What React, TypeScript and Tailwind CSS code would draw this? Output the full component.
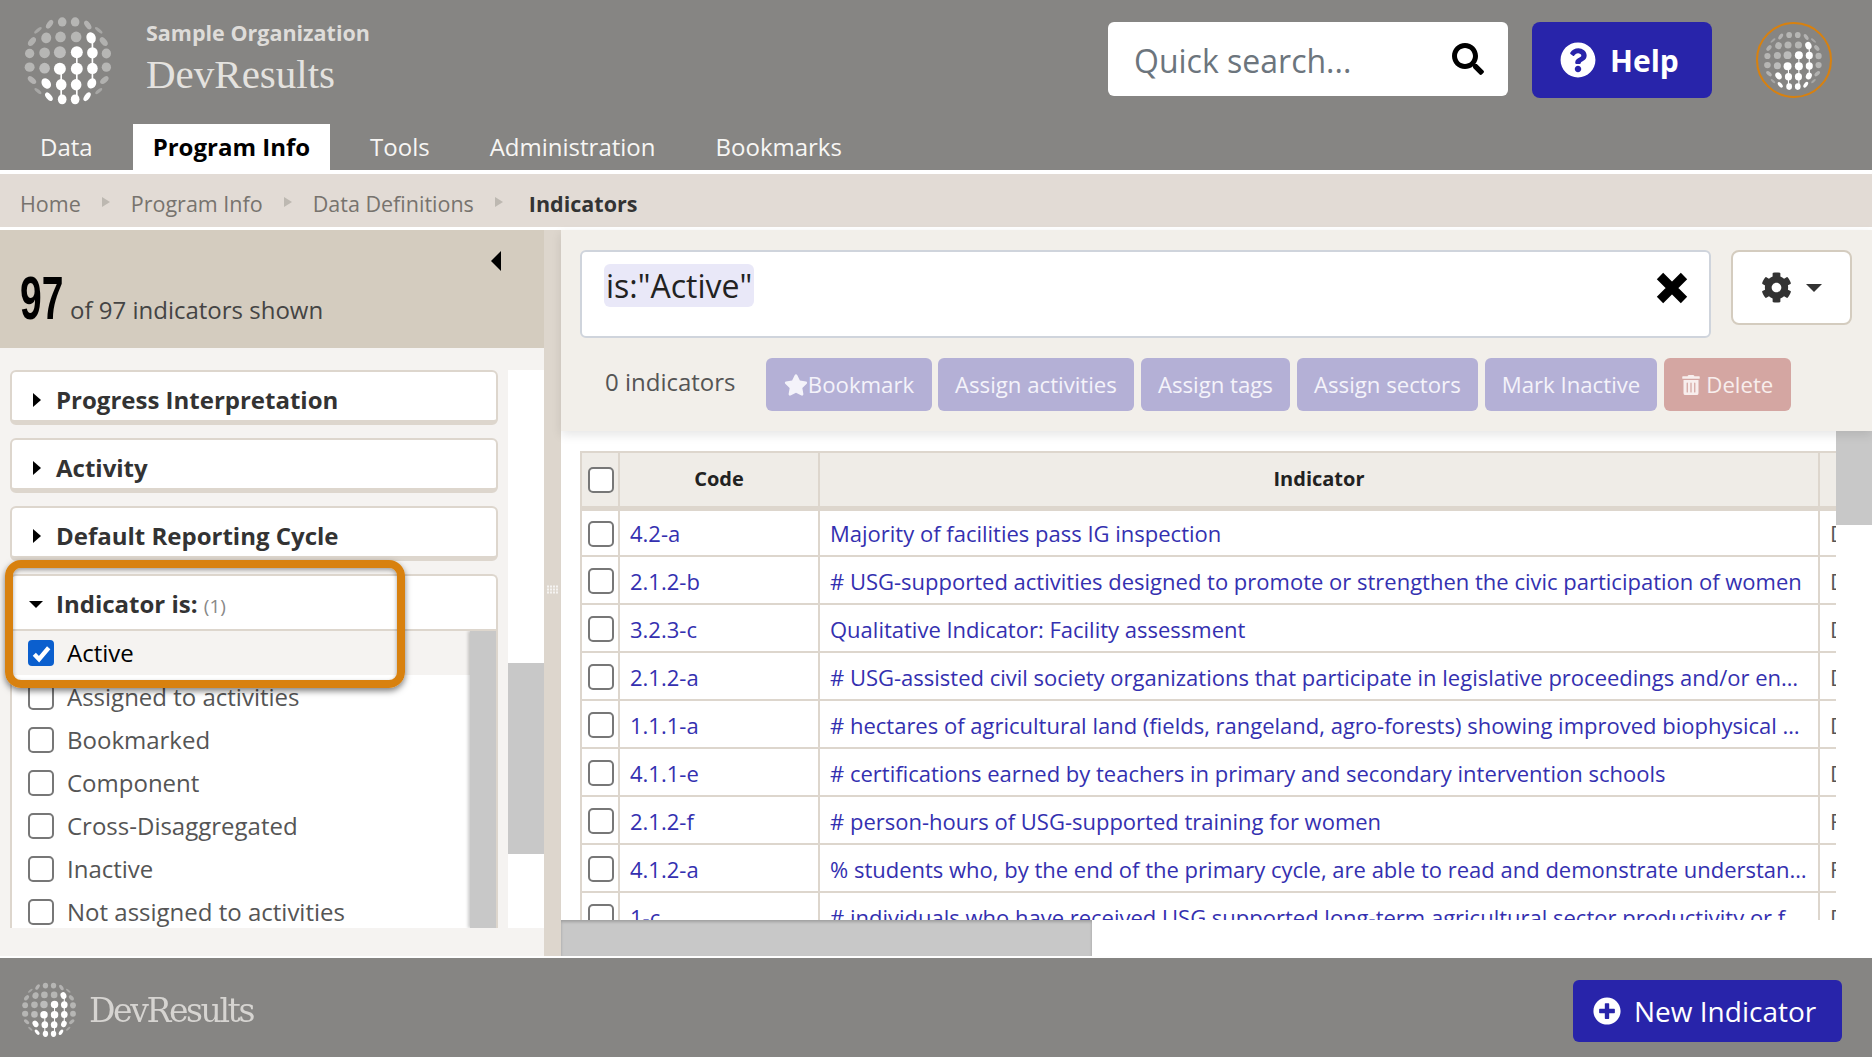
import { FaCog, FaPlusCircle, FaQuestionCircle, FaSearch, FaStar, FaTrashAlt } from 'react-icons/fa';

// x, y, rx, ry, rotation, opacity (traced from the logo)
const globeDots: number[][] = [
  [70, 62, 5, 14, 50, 0.28], [105, 44, 8, 15, 35, 0.38], [143, 37, 13, 14, 0, 0.4], [182, 37, 13, 14, 0, 0.4], [220, 46, 8, 15, -35, 0.38], [253, 62, 5, 14, -50, 0.28],
  [52, 96, 9, 15, 40, 0.36], [95, 85, 15, 16, 15, 0.4], [138, 82, 16, 16, 0, 0.4], [185, 82, 16, 16, 0, 0.4], [230, 85, 14, 17, -20, 1], [268, 96, 9, 15, -40, 0.36],
  [45, 132, 14, 14, 0, 0.4], [90, 130, 16, 16, 0, 0.4], [136, 128, 18, 18, 0, 0.45], [187, 128, 18, 18, 0, 1], [234, 130, 16, 17, 0, 1], [276, 132, 14, 15, 0, 0.4],
  [45, 173, 15, 14, 0, 0.4], [90, 176, 16, 16, 0, 0.45], [136, 178, 18, 18, 0, 1], [187, 178, 18, 18, 0, 1], [234, 177, 16, 17, 0, 1], [276, 173, 14, 14, 0, 0.4],
  [52, 212, 8, 15, -50, 0.38], [95, 222, 13, 17, -35, 1], [140, 226, 16, 17, 0, 1], [185, 226, 16, 17, 0, 1], [232, 222, 13, 16, 25, 1], [270, 212, 8, 15, 50, 0.36],
  [70, 245, 5, 13, -50, 0.28], [103, 262, 8, 15, -40, 1], [143, 270, 13, 15, 0, 1], [182, 270, 13, 15, 0, 1], [218, 262, 8, 15, 35, 1], [253, 245, 5, 13, 50, 0.28],
];

function Globe({ className }: { className: string }) {
  return (
    <svg viewBox="25 10 280 280" className={className}>
      <path d="M187 130V270M234 85V220M140 178V270" stroke="#fff" strokeWidth="5" fill="none" />
      {globeDots.map(([x, y, rx, ry, rot, o], i) => (
        <ellipse key={i} cx={x} cy={y} rx={rx} ry={ry} transform={`rotate(${rot} ${x} ${y})`} fill="#fff" opacity={o} />
      ))}
    </svg>
  );
}

function Checkbox({ checked }: { checked?: boolean }) {
  if (checked) {
    return (
      <span className="flex h-[26px] w-[26px] shrink-0 items-center justify-center rounded-[4px] bg-[#0b5fce]">
        <svg viewBox="0 0 16 16" className="h-[23px] w-[23px]">
          <path d="M3 8.5l3.3 3.5L13 4" fill="none" stroke="#fff" strokeWidth="3" />
        </svg>
      </span>
    );
  }
  return <span className="block h-[26px] w-[26px] shrink-0 rounded-[5px] border-2 border-[#777] bg-white" />;
}

function Caret({ open }: { open?: boolean }) {
  if (open) return <span className="h-0 w-0 border-x-[7px] border-t-[7px] border-x-transparent border-t-black" />;
  return <span className="ml-[3px] h-0 w-0 border-y-[7px] border-l-[8px] border-y-transparent border-l-black" />;
}

function FilterCard({ title }: { title: string }) {
  return (
    <div className="flex h-[55px] items-center gap-[15px] rounded-[6px] border-2 border-b-[5px] border-[#ddd6cd] bg-white pl-[18px] pt-[7px] text-[24px] font-bold text-[#333]">
      <Caret />
      <span>{title}</span>
    </div>
  );
}

const tabs = ['Data', 'Program Info', 'Tools', 'Administration', 'Bookmarks'];
const crumbs = ['Home', 'Program Info', 'Data Definitions'];
const options = ['Active', 'Assigned to activities', 'Bookmarked', 'Component', 'Cross-Disaggregated', 'Inactive', 'Not assigned to activities'];
const actions = ['Assign activities', 'Assign tags', 'Assign sectors', 'Mark Inactive'];

const rows = [
  ['4.2-a', 'Majority of facilities pass IG inspection', 'D'],
  ['2.1.2-b', '# USG-supported activities designed to promote or strengthen the civic participation of women', 'D'],
  ['3.2.3-c', 'Qualitative Indicator: Facility assessment', 'D'],
  ['2.1.2-a', '# USG-assisted civil society organizations that participate in legislative proceedings and/or engage in advocacy', 'D'],
  ['1.1.1-a', '# hectares of agricultural land (fields, rangeland, agro-forests) showing improved biophysical conditions', 'D'],
  ['4.1.1-e', '# certifications earned by teachers in primary and secondary intervention schools', 'D'],
  ['2.1.2-f', '# person-hours of USG-supported training for women', 'F'],
  ['4.1.2-a', '% students who, by the end of the primary cycle, are able to read and demonstrate understanding of grade level text', 'F'],
  ['1-c', '# individuals who have received USG supported long-term agricultural sector productivity or food security training', 'D'],
];

export default function App() {
  return (
    <div className="flex h-[1057px] w-[1872px] flex-col overflow-hidden bg-white font-['Open_Sans',sans-serif]">
      {/* Header */}
      <header className="h-[170px] shrink-0 bg-[#868583]">
        <div className="flex h-[124px] items-start">
          <Globe className="ml-[23px] mt-[13px] h-[93px] w-[93px] blur-[0.6px]" />
          <div className="ml-[30px] mt-[18px] w-[300px]">
            <div className="text-[21.5px] font-bold leading-[30px] text-[#dedcd9]">Sample Organization</div>
            <div className="mt-[3px] font-['Liberation_Serif',serif] text-[41px] leading-[46px] text-[#e4e2df]">DevResults</div>
          </div>
          <div className="ml-[662px] mt-[22px] flex h-[74px] w-[400px] items-center justify-between rounded-[6px] bg-white pl-[26px] pr-[24px]">
            <span className="pt-[3px] text-[32px] text-[#6c757d]">Quick search...</span>
            <FaSearch className="h-[32px] w-[32px] text-black" />
          </div>
          <button className="ml-[24px] mt-[22px] flex h-[76px] w-[180px] items-center gap-[14px] rounded-[8px] bg-[#2824aa] pl-[28px] text-[30px] font-bold text-white">
            <FaQuestionCircle className="h-[36px] w-[36px]" />
            Help
          </button>
          <div className="ml-[44px] mt-[22px] flex h-[76px] w-[76px] items-center justify-center rounded-full border-2 border-[#d8810f]">
            <Globe className="h-[62px] w-[62px] blur-[0.4px]" />
          </div>
        </div>
        <nav className="flex h-[46px] items-stretch pl-[20px] text-[24px] text-[#f7f6f4]">
          {tabs.map((tab) => (
            <span
              key={tab}
              className={
                tab === 'Program Info'
                  ? 'mr-[20px] flex items-center bg-white px-[20px] pb-[1px] font-bold text-black'
                  : 'mr-[20px] flex items-center px-[20px] pb-[1px]'
              }
            >
              {tab}
            </span>
          ))}
        </nav>
      </header>

      {/* Breadcrumb */}
      <div className="mt-[4px] flex h-[53px] shrink-0 items-center bg-[#e2dbd5] pl-[20px] pt-[8px] text-[21.5px] text-[#77736e]">
        {crumbs.map((crumb) => (
          <span key={crumb} className="flex items-center">
            {crumb}
            <span className="mx-[21px] mb-[6px] h-0 w-0 border-y-[5px] border-l-[8px] border-y-transparent border-l-[#bdb8b1]" />
          </span>
        ))}
        <span className="ml-[5px] font-bold text-[#333]">Indicators</span>
      </div>

      {/* Main */}
      <main className="mt-[3px] flex h-[726px] shrink-0">
        <aside className="relative flex w-[544px] shrink-0 flex-col bg-[#f5f3f1]">
          <div className="relative flex h-[118px] shrink-0 items-end bg-[#d4ccbf] pb-[20px] pl-[20px]">
            <span className="h-[60px] w-[50px] origin-left scale-x-[0.63] font-['Liberation_Sans',sans-serif] text-[62px] font-bold leading-[60px] text-black">97</span>
            <span className="text-[24px] leading-[36px] text-[#444]">of 97 indicators shown</span>
            <span className="absolute left-[491px] top-[21px] h-0 w-0 border-y-[10px] border-r-[10px] border-y-transparent border-r-black" />
          </div>
          <div className="flex min-h-0 flex-1 pl-[10px] pt-[22px]">
            <div className="flex w-[488px] flex-col gap-[13px] pb-[28px]">
              <FilterCard title="Progress Interpretation" />
              <FilterCard title="Activity" />
              <FilterCard title="Default Reporting Cycle" />
              <div className="flex min-h-0 flex-1 flex-col overflow-hidden rounded-t-[6px] border-x-2 border-t-2 border-[#ddd6cd] bg-white">
                <div className="flex h-[55px] shrink-0 items-center gap-[13px] border-b-2 border-[#ddd6cd] pl-[17px] pt-[3px] text-[24px] font-bold text-[#333]">
                  <Caret open />
                  <span>
                    Indicator is: <span className="text-[19px] font-normal text-[#888]">(1)</span>
                  </span>
                </div>
                <div className="flex min-h-0 flex-1 overflow-hidden">
                  <ul className="flex-1 text-[24px] text-[#555]">
                    {options.map((option, i) => (
                      <li key={option} className={i === 0 ? 'flex h-[44px] items-center gap-[13px] bg-[#f5f3f1] pl-[16px] text-black' : 'flex h-[43px] items-center gap-[13px] pl-[16px]'}>
                        <Checkbox checked={i === 0} />
                        {option}
                      </li>
                    ))}
                  </ul>
                  <div className="w-[26px] bg-[#c8c8c8] shadow-[-2px_0_3px_rgba(0,0,0,0.2)]" />
                </div>
              </div>
            </div>
            <div className="mb-[28px] ml-[10px] flex w-[36px] flex-col bg-white pt-[293px]">
              <div className="h-[191px] bg-[#c8c8c8]" />
            </div>
          </div>
          {/* Highlight around the open filter */}
          <div className="pointer-events-none absolute left-[5px] top-[330px] h-[128px] w-[400px] rounded-[16px] border-[8px] border-[#d8810f] shadow-[0_3px_6px_rgba(0,0,0,0.5),inset_0_2px_4px_rgba(0,0,0,0.35)]" />
        </aside>

        <div className="flex w-[17px] shrink-0 items-center justify-center bg-[#ddd6cd] pb-[8px]">
          <svg viewBox="0 0 14 9" className="h-[9px] w-[14px]">
            <path d="M1 1.5h12M1 4.5h12M1 7.5h12" stroke="#f5f3f1" strokeWidth="2" strokeDasharray="2 1" />
          </svg>
        </div>

        <section className="flex min-w-0 flex-1 flex-col">
          <div className="relative h-[201px] shrink-0 bg-[#f2efea] shadow-[0_4px_10px_rgba(0,0,0,0.1)]">
            <div className="flex gap-[20px] pl-[19px] pt-[20px]">
              <div className="flex h-[88px] w-[1131px] items-start justify-between rounded-[6px] border-2 border-[#cfd4dc] bg-white pl-[22px] pr-[21px] pt-[12px]">
                <span className="flex h-[43px] items-center rounded-[6px] bg-[#e9e8f8] px-[2px] pt-[1px] text-[32px] text-[#222]">is:"Active"</span>
                <svg viewBox="0 0 32 32" className="mt-[8px] h-[32px] w-[32px]">
                  <path d="M4 4l24 24M28 4L4 28" stroke="#000" strokeWidth="9" fill="none" />
                </svg>
              </div>
              <button className="flex h-[75px] w-[121px] items-center justify-center gap-[14px] rounded-[8px] border-2 border-[#d4ccbf] bg-white">
                <FaCog className="h-[31px] w-[31px] text-[#333]" />
                <span className="h-0 w-0 border-x-[8px] border-t-[8px] border-x-transparent border-t-[#333]" />
              </button>
            </div>
            <div className="mt-[20px] flex items-center pl-[44px] text-[22.2px]">
              <span className="mr-[31px] w-[130px] whitespace-nowrap pb-[6px] text-[24px] text-[#555]">0 indicators</span>
              <button className="mr-[6px] flex h-[53px] w-[166px] items-center justify-center rounded-[6px] bg-[#b4b0d6] text-[#f4f3fa]">
                <FaStar className="h-[24px] w-[24px]" />
                Bookmark
              </button>
              {actions.map((action) => (
                <button key={action} className="mr-[7px] h-[53px] rounded-[6px] bg-[#b4b0d6] px-[17px] text-[#f4f3fa]">
                  {action}
                </button>
              ))}
              <button className="flex h-[53px] w-[127px] items-center justify-center gap-[6px] rounded-[6px] bg-[#d4a6a2] text-[#f8eeed]">
                <FaTrashAlt className="h-[20px] w-[18px]" />
                Delete
              </button>
            </div>
          </div>

          <div className="flex min-h-0 flex-1">
            <div className="min-w-0 flex-1 overflow-hidden pl-[19px] pt-[20px] shadow-[2px_0_4px_rgba(0,0,0,0.06)]">
              <table className="w-[1320px] table-fixed border-collapse text-[22px]">
                <colgroup>
                  <col className="w-[38px]" />
                  <col className="w-[200px]" />
                  <col className="w-[1000px]" />
                  <col />
                </colgroup>
                <thead>
                  <tr className="h-[56px] border-2 border-b-[5px] border-[#ddd6cd] bg-[#efece7] text-[20px] font-bold text-[#222]">
                    <th className="border-r-2 border-[#ddd6cd] pl-[6px] pt-[1px]">
                      <Checkbox />
                    </th>
                    <th className="border-r-2 border-[#ddd6cd]">Code</th>
                    <th className="border-r-2 border-[#ddd6cd]">Indicator</th>
                    <th />
                  </tr>
                </thead>
                <tbody>
                  {rows.map(([code, name, tail]) => (
                    <tr key={code} className="h-[48px] border-x-2 border-b-2 border-[#ddd6cd] text-[#3430b0]">
                      <td className="border-r-2 border-[#ddd6cd] pl-[6px] pt-[2px]">
                        <Checkbox />
                      </td>
                      <td className="border-r-2 border-[#ddd6cd] pl-[10px] pt-[2px]">{code}</td>
                      <td className="truncate border-r-2 border-[#ddd6cd] pl-[10px] pr-[10px] pt-[2px]">{name}</td>
                      <td className="pl-[10px] pt-[2px] text-[#555]">{tail}</td>
                    </tr>
                  ))}
                </tbody>
              </table>
            </div>
            <div className="w-[36px] shrink-0 bg-white">
              <div className="h-[94px] bg-[#c8c8c8]" />
            </div>
          </div>

          <div className="h-[36px] shrink-0 bg-white">
            <div className="h-full w-[531px] bg-[#c8c8c8] shadow-[inset_0_2px_3px_rgba(0,0,0,0.2)]" />
          </div>
        </section>
      </main>

      {/* Footer */}
      <footer className="mt-[2px] flex min-h-0 flex-1 items-center justify-between bg-[#868583] pl-[21px] pr-[30px] pt-[6px]">
        <div className="flex items-center gap-[10px]">
          <Globe className="mb-[4px] h-[58px] w-[58px] blur-[0.7px]" />
          <span className="font-['DejaVu_Serif',serif] text-[33px] tracking-[-2.4px] text-[#d6d4d1] blur-[0.5px]">DevResults</span>
        </div>
        <button className="flex h-[62px] w-[269px] items-center gap-[13px] rounded-[6px] bg-[#2824aa] pl-[20px] text-[28px] text-white">
          <FaPlusCircle className="h-[28px] w-[28px]" />
          New Indicator
        </button>
      </footer>
    </div>
  );
}
